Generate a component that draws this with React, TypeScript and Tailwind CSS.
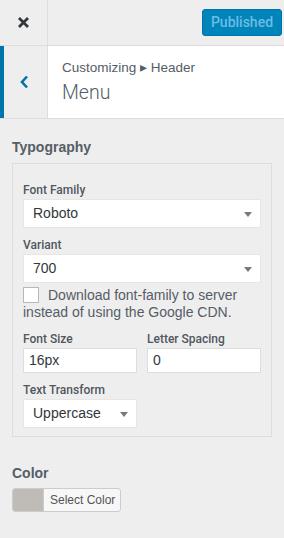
import React from 'react';

const SelectBox = ({ value, className = '' }: { value: string; className?: string }) => (
  <div className={`relative flex h-[29px] items-center border border-[#e6e6e6] bg-white pl-[9px] text-[14px] text-[#32373c] ${className}`}>
    <span>{value}</span>
    <span className="absolute right-[8px] top-[12px] h-0 w-0 border-x-[4px] border-t-[5px] border-x-transparent border-t-[#7a7a7a]" />
  </div>
);

const Label = ({ children }: { children: React.ReactNode }) => (
  <div className="mb-[2px] font-['Roboto','Liberation_Sans',sans-serif] text-[12px] font-medium leading-[14px] text-[#50575e]">
    {children}
  </div>
);

const App = () => {
  return (
    <div className="h-[538px] w-[284px] overflow-hidden bg-[#eeeeee] font-['Liberation_Sans',Arial,sans-serif] text-[#555d66]">
      <div className="flex h-[46px] border-b border-[#dddddd]">
        <div className="flex w-[48px] items-center justify-center border-r border-[#dddddd]">
          <svg width="13" height="13" viewBox="0 0 13 13">
            <path d="M2 2 L11 11 M11 2 L2 11" stroke="#32373c" strokeWidth="2.8" />
          </svg>
        </div>
        <div className="flex flex-1 items-center justify-end pr-[2px]">
          <button className="h-[27px] w-[80px] rounded-[3px] border border-[#0073aa] bg-[#0085ba] font-['Roboto','Liberation_Sans',sans-serif] text-[14px] font-medium text-[#6cbde3]">
            Published
          </button>
        </div>
      </div>

      <div className="flex h-[73px] border-b border-[#dddddd] bg-white">
        <div className="flex w-[48px] items-center justify-center border-l-[4px] border-r border-l-[#0073aa] border-r-[#dddddd] bg-[#eeeeee] pr-[2px]">
          <svg width="9" height="14" viewBox="0 0 9 14">
            <path d="M7 1.5 L2 7 L7 12.5" fill="none" stroke="#0073aa" strokeWidth="2.6" />
          </svg>
        </div>
        <div className="flex flex-col justify-center pl-[14px]">
          <div className="text-[13.5px] leading-[18px] text-[#555d66]">Customizing ▸ Header</div>
          <div className="mt-[4px] font-['Roboto','Liberation_Sans',sans-serif] text-[19.5px] font-light leading-[24px] text-[#555d66]">
            Menu
          </div>
        </div>
      </div>

      <div className="px-[12px] pt-[18px]">
        <div className="text-[14px] font-bold leading-[20px] text-[#555d66]">Typography</div>
        <div className="mt-[6px] border border-[#dddddd] px-[10px] pb-[8px] pt-[19px]">
          <Label>Font Family</Label>
          <SelectBox value="Roboto" />
          <div className="mt-[10px]">
            <Label>Variant</Label>
            <SelectBox value="700" />
          </div>
          <div className="mt-[4px] text-[14px] leading-[17px] text-[#555d66]">
            <span className="float-left mr-[9px] block h-[16px] w-[16px] border border-[#b4b9be] bg-white" />
            Download font-family to server instead of using the Google CDN.
          </div>
          <div className="mt-[11px] grid grid-cols-2 gap-[10px]">
            <div>
              <Label>Font Size</Label>
              <div className="flex h-[25px] items-center border border-[#dddddd] bg-white pl-[5px] text-[14px] text-[#32373c]">16px</div>
            </div>
            <div>
              <Label>Letter Spacing</Label>
              <div className="flex h-[25px] items-center border border-[#dddddd] bg-white pl-[5px] text-[14px] text-[#32373c]">0</div>
            </div>
          </div>
          <div className="mt-[10px]">
            <Label>Text Transform</Label>
            <SelectBox value="Uppercase" className="w-[114px]" />
          </div>
        </div>

        <div className="mt-[26px] text-[14px] font-bold leading-[20px] text-[#555d66]">Color</div>
        <div className="mt-[5px] flex h-[24px] w-[109px] overflow-hidden rounded-[3px] border border-[#cccccc] bg-[#f7f7f7]">
          <div className="w-[30px] bg-[#bfbcb8]" />
          <div className="flex flex-1 items-center border-l border-[#cccccc] pl-[6px] text-[12px] text-[#555555]">Select Color</div>
        </div>
      </div>
    </div>
  );
};

export default App;
